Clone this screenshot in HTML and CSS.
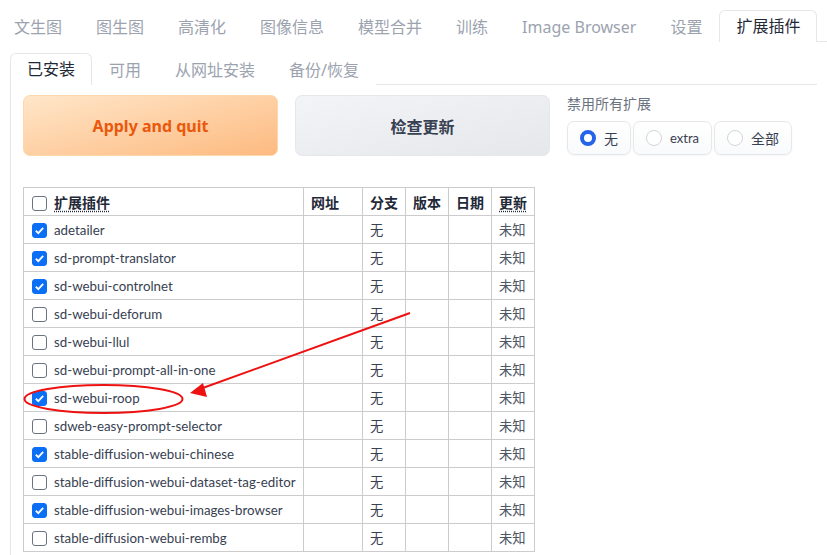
FILE: index.html
```html
<!DOCTYPE html>
<html>
<head>
    <title>扩展插件</title>
    <link rel="stylesheet" href="styles.css">
</head>
<body>
    <div class="top-tabs">
        <div class="tab">文生图</div>
        <div class="tab">图生图</div>
        <div class="tab">高清化</div>
        <div class="tab">图像信息</div>
        <div class="tab">模型合并</div>
        <div class="tab">训练</div>
        <div class="tab">Image Browser</div>
        <div class="tab">设置</div>
        <div class="tab active">扩展插件</div>
    </div>

    <div class="content">
        <div class="sub-tabs">
            <div class="tab active">已安装</div>
            <div class="tab">可用</div>
            <div class="tab">从网址安装</div>
            <div class="tab">备份/恢复</div>
        </div>

        <div class="panel">
            <div class="actions">
                <button class="btn btn-primary">Apply and quit</button>
                <button class="btn btn-secondary">检查更新</button>
                <div class="disable-all">
                    <div class="field-label">禁用所有扩展</div>
                    <div class="radio-group">
                        <label class="radio-item"><span class="radio checked"></span>无</label>
                        <label class="radio-item"><span class="radio"></span><span class="latin">extra</span></label>
                        <label class="radio-item"><span class="radio"></span>全部</label>
                    </div>
                </div>
            </div>

            <table class="ext-table">
                <colgroup>
                    <col class="c-name">
                    <col class="c-url">
                    <col class="c-small">
                    <col class="c-small">
                    <col class="c-small">
                    <col class="c-small">
                </colgroup>
                <thead>
                    <tr>
                        <th><span class="check"></span><abbr>扩展插件</abbr></th>
                        <th>网址</th>
                        <th>分支</th>
                        <th>版本</th>
                        <th>日期</th>
                        <th><abbr>更新</abbr></th>
                    </tr>
                </thead>
                <tbody id="ext-rows"></tbody>
            </table>
        </div>
    </div>

    <svg class="annotation" width="827" height="555" viewBox="0 0 827 555">
        <ellipse cx="103.5" cy="399" rx="79" ry="14" fill="none" stroke="#ee1111" stroke-width="2"/>
        <line x1="410" y1="313" x2="200" y2="389" stroke="#ee1111" stroke-width="2"/>
        <polygon points="190,393 203,383 207,397" fill="#ee1111"/>
    </svg>

    <script>
        var extensions = [
            ['adetailer', true],
            ['sd-prompt-translator', true],
            ['sd-webui-controlnet', true],
            ['sd-webui-deforum', false],
            ['sd-webui-llul', false],
            ['sd-webui-prompt-all-in-one', false],
            ['sd-webui-roop', true],
            ['sdweb-easy-prompt-selector', false],
            ['stable-diffusion-webui-chinese', true],
            ['stable-diffusion-webui-dataset-tag-editor', false],
            ['stable-diffusion-webui-images-browser', true],
            ['stable-diffusion-webui-rembg', false]
        ];

        var rows = document.getElementById('ext-rows');
        extensions.forEach(function (ext) {
            var tr = document.createElement('tr');
            tr.innerHTML =
                '<td><span class="check' + (ext[1] ? ' checked' : '') + '"></span>' + ext[0] + '</td>' +
                '<td></td><td>无</td><td></td><td></td><td class="unknown">未知</td>';
            rows.appendChild(tr);
        });
    </script>
</body>
</html>
```

FILE: styles.css
```css
body {
    margin: 0;
    font-family: "Noto Sans", "Noto Sans CJK SC", sans-serif;
    color: #1f2937;
    background: #fff;
    overflow: hidden;
    position: relative;
}

.top-tabs,
.sub-tabs {
    display: flex;
    align-items: flex-end;
    border-bottom: 1px solid #e5e7eb;
}

.top-tabs {
    padding-top: 10px;
    margin-left: -3px;
}

.tab {
    padding: 5px 16px;
    font-size: 16px;
    line-height: 20px;
    color: #9ca3af;
    border: 1px solid transparent;
    border-bottom: none;
    border-radius: 6px 6px 0 0;
    margin-bottom: -1px;
    background: #fff;
    white-space: nowrap;
}

.tab.active {
    color: #1f2937;
    border-color: #e5e7eb;
    padding-bottom: 6px;
}

.content {
    padding: 10px;
}

.sub-tabs {
    padding-top: 1px;
}

.panel {
    border: 1px solid #e5e7eb;
    border-top: none;
    padding: 10px 12px;
    width: 1000px;
}

.actions {
    display: grid;
    grid-template-columns: 255px 255px 255px;
    column-gap: 17px;
}

.btn {
    height: 61px;
    border-radius: 7px;
    font-family: "Noto Sans", "Noto Sans CJK SC", sans-serif;
    font-size: 16px;
    font-weight: bold;
    cursor: pointer;
}

.btn-primary {
    color: #ea580c;
    border: 1px solid #fed7aa;
    background: linear-gradient(to bottom right, #ffe6c9, #fdba80);
}

.btn-secondary {
    color: #374151;
    border: 1px solid #e5e7eb;
    background: linear-gradient(to bottom right, #f3f4f6, #e5e7eb);
}

.field-label {
    font-size: 14px;
    line-height: 20px;
    color: #6b7280;
    margin-top: -1px;
}

.radio-group {
    display: flex;
    gap: 2px;
    margin-top: 7px;
}

.radio-item {
    display: flex;
    align-items: center;
    gap: 8px;
    height: 32px;
    padding: 0 12px;
    font-family: Lato, "Noto Sans CJK SC", sans-serif;
    font-size: 14px;
    color: #374151;
    border: 1px solid #e5e7eb;
    border-radius: 7px;
    background: linear-gradient(to bottom, #fff, #f9fafb);
    box-shadow: 0 1px 2px rgba(0, 0, 0, 0.04);
}

.radio-item .latin {
    font-size: 13px;
}

.radio {
    width: 14px;
    height: 14px;
    border: 1px solid #d1d5db;
    border-radius: 50%;
    background: #fff;
}

.radio.checked {
    width: 8px;
    height: 8px;
    border: 4px solid #2563eb;
}

.ext-table {
    margin-top: 31px;
    border-collapse: collapse;
    table-layout: fixed;
    width: 511px;
    font-family: Lato, "Noto Sans CJK SC", sans-serif;
    font-size: 13.3px;
    color: #374151;
}

.c-name { width: 280px; }
.c-url { width: 59px; }
.c-small { width: 43px; }

.ext-table th,
.ext-table td {
    border: 1px solid #cccccc;
    height: 27px;
    padding: 0 0 0 7px;
    text-align: left;
    white-space: nowrap;
    overflow: hidden;
    vertical-align: middle;
}

.ext-table td:first-child,
.ext-table th:first-child {
    padding-left: 8px;
}

.ext-table th {
    font-weight: bold;
    font-size: 14px;
    color: #1f2937;
}

.ext-table abbr {
    text-decoration: underline dotted;
    text-underline-offset: 3px;
}

.ext-table .unknown {
    color: #4b5563;
}

.check {
    display: inline-block;
    box-sizing: border-box;
    width: 15px;
    height: 15px;
    border: 1px solid #6b7280;
    border-radius: 3px;
    vertical-align: -3px;
    margin-right: 7px;
    background: #fff;
}

.check.checked {
    border-color: #0b6ef6;
    background: #0b6ef6 url("data:image/svg+xml,%3Csvg xmlns='http://www.w3.org/2000/svg' viewBox='0 0 16 16'%3E%3Cpath d='M3.5 8.3l3 3 6-6.6' fill='none' stroke='white' stroke-width='2.2'/%3E%3C/svg%3E") center / 13px no-repeat;
}

.annotation {
    position: absolute;
    left: 0;
    top: 0;
    pointer-events: none;
}
```
